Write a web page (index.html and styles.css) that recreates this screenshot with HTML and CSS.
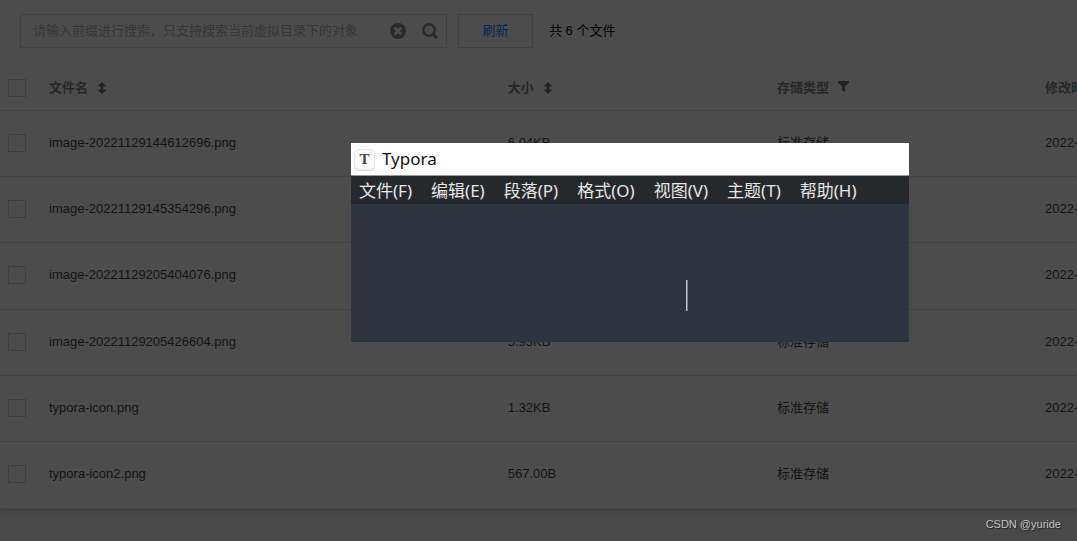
FILE: index.html
```html
<!DOCTYPE html>
<html lang="zh-CN">
<head>
<meta charset="utf-8">
<meta name="viewport" content="width=device-width, initial-scale=1">
<title>Typora</title>
<link rel="stylesheet" href="styles.css">
</head>
<body>
<svg class="symbols" aria-hidden="true">
  <symbol id="sort" viewBox="0 0 10 12"><path d="M5 0 9.500 4.500H6.200V7.500H9.500L5 12 .5 7.500H3.800V4.500H.5Z"/></symbol>
</svg>
<main class="files">
  <form class="toolbar">
    <div class="search">
      <input class="search-input" type="text" aria-label="搜索" placeholder="请输入前缀进行搜索，只支持搜索当前虚拟目录下的对象">
      <button class="icon-button" type="reset" aria-label="清除">
        <svg width="16" height="16" viewBox="0 0 16 16"><circle cx="8" cy="8" r="8" fill="#2a2a2a"/><path d="m4.800 4.800 6.400 6.400m0-6.400-6.400 6.400" stroke="#4c4c4c" stroke-width="3"/></svg>
      </button>
      <button class="icon-button" type="button" aria-label="查找">
        <svg width="16" height="16" viewBox="0 0 16 16" fill="none" stroke="#2a2a2a"><circle cx="7" cy="7" r="5.800" stroke-width="2.400"/><path d="m11 11 4 4" stroke-width="3"/></svg>
      </button>
    </div>
    <button class="refresh" type="button">刷新</button>
    <span class="count">共 6 个文件</span>
  </form>
  <table class="table">
    <colgroup><col class="col-check"><col class="col-name"><col class="col-size"><col><col class="col-date"></colgroup>
    <thead>
      <tr>
        <th><input class="check" type="checkbox" aria-label="全选"></th>
        <th><span class="head">文件名<button class="icon-button" type="button" aria-label="按文件名排序"><svg class="sort" width="10" height="12"><use href="#sort"/></svg></button></span></th>
        <th><span class="head">大小<button class="icon-button" type="button" aria-label="按大小排序"><svg class="sort" width="10" height="12"><use href="#sort"/></svg></button></span></th>
        <th><span class="head">存储类型<button class="icon-button" type="button" aria-label="筛选"><svg class="sort" width="11" height="14" viewBox="0 0 11 14"><path d="M0 0H11V1.500L7 5.500V11L4 9V5.500L0 1.500Z"/></svg></button></span></th>
        <th>修改时间</th>
      </tr>
    </thead>
    <tbody>
      <tr><td><input class="check" type="checkbox" aria-label="image-20221129144612696.png"></td><td>image-20221129144612696.png</td><td>6.04KB</td><td>标准存储</td><td>2022-11-29</td></tr>
      <tr><td><input class="check" type="checkbox" aria-label="image-20221129145354296.png"></td><td>image-20221129145354296.png</td><td></td><td>标准存储</td><td>2022-11-29</td></tr>
      <tr><td><input class="check" type="checkbox" aria-label="image-20221129205404076.png"></td><td>image-20221129205404076.png</td><td></td><td>标准存储</td><td>2022-11-29</td></tr>
      <tr><td><input class="check" type="checkbox" aria-label="image-20221129205426604.png"></td><td>image-20221129205426604.png</td><td>5.93KB</td><td>标准存储</td><td>2022-11-29</td></tr>
      <tr><td><input class="check" type="checkbox" aria-label="typora-icon.png"></td><td>typora-icon.png</td><td>1.32KB</td><td>标准存储</td><td>2022-11-29</td></tr>
      <tr><td><input class="check" type="checkbox" aria-label="typora-icon2.png"></td><td>typora-icon2.png</td><td>567.00B</td><td>标准存储</td><td>2022-11-29</td></tr>
    </tbody>
  </table>
</main>
<footer class="credit">CSDN @yuride</footer>
<section class="window" aria-label="Typora">
  <header class="titlebar"><span class="logo">T</span>Typora</header>
  <nav class="menu">
    <button type="button">文件(F)</button>
    <button type="button">编辑(E)</button>
    <button type="button">段落(P)</button>
    <button type="button">格式(O)</button>
    <button type="button">视图(V)</button>
    <button type="button">主题(T)</button>
    <button type="button">帮助(H)</button>
  </nav>
  <div class="editor"><span class="caret"></span></div>
</section>
</body>
</html>
```
FILE: styles.css
```css
* { box-sizing: border-box; }

body {
  position: relative;
  display: flex;
  flex-direction: column;
  min-height: 100vh;
  margin: 0;
  overflow: hidden;
  background: #484848;
  color: #141414;
  font: 13px/20px "Liberation Sans", "Noto Sans CJK SC", sans-serif;
}

button, input { font: inherit; color: inherit; }
button { padding: 0; border: 0; background: none; }

.symbols { position: absolute; width: 0; height: 0; }

.files {
  background: #4c4c4c;
  box-shadow: 0 1px 4px #383838;
}

.toolbar {
  display: flex;
  align-items: center;
  padding: 14px 20px 18px;
}

.search {
  display: flex;
  align-items: center;
  gap: 16px;
  width: 427px;
  height: 34px;
  padding: 0 8px 0 12px;
  border: 1px solid #404142;
}

.search-input {
  flex: 1;
  min-width: 0;
  padding: 0;
  border: 0;
  outline: 0;
  background: none;
}
.search-input::placeholder { color: #363636; opacity: 1; }

.icon-button { display: flex; }

.refresh {
  width: 75px;
  height: 34px;
  margin: 0 16px 0 11px;
  border: 1px solid #3f4042;
  color: #00265a;
}

.count { color: #000; }

.table {
  width: 100%;
  table-layout: fixed;
  border-collapse: separate;
  border-spacing: 0;
}
.col-check { width: 49px; }
.col-name { width: 42.6%; }
.col-size { width: 25%; }
.col-date { width: 32px; }

.table th, .table td {
  height: 66px;
  padding: 0 0 2px;
  border-bottom: 1px solid #424242;
  text-align: left;
  white-space: nowrap;
}
.table th {
  height: 45px;
  padding: 0;
  color: #272727;
}
.table tr:nth-child(3n) td { height: 67px; }
.table th:first-child, .table td:first-child { padding-left: 8px; }

.head { display: flex; align-items: center; gap: 9px; }
.sort { fill: #222; }

.check {
  display: block;
  appearance: none;
  width: 18px;
  height: 18px;
  margin: 0;
  border: 1px solid #3d3e3f;
}

.credit {
  margin-top: auto;
  padding: 0 16px 8px;
  color: #c4c4c4;
  font-size: 11px;
  line-height: 18px;
  text-align: right;
  text-shadow: 1px 1px 1px #222;
}

.window {
  position: absolute;
  top: 143px;
  left: 351px;
  width: 558px;
  background: #2e3440;
  font-family: "Noto Sans", "Noto Sans CJK SC", sans-serif;
  font-size: 17px;
}

.titlebar {
  display: flex;
  align-items: center;
  gap: 7px;
  height: 33px;
  padding: 0 3px;
  border-bottom: 1px solid #999;
  background: #fff;
  color: #111;
}

.logo {
  width: 21px;
  height: 21px;
  border: 1px solid #e8e8e8;
  border-radius: 5px;
  background: #fafafa;
  box-shadow: 0 1px 1px #ddd;
  color: #444;
  font: bold 15px/18px "Liberation Serif", serif;
  text-align: center;
}

.menu {
  display: flex;
  gap: 19px;
  padding: 3px 8px 1px;
  background: #27282b;
  color: #e6e6e6;
  line-height: 24px;
}

.editor {
  display: flex;
  justify-content: center;
  height: 138px;
  padding: 76px 0 0 114px;
}

.caret {
  width: 2px;
  height: 31px;
  border-left: 1px solid #c8cacd;
  background: #777b84;
}
```
